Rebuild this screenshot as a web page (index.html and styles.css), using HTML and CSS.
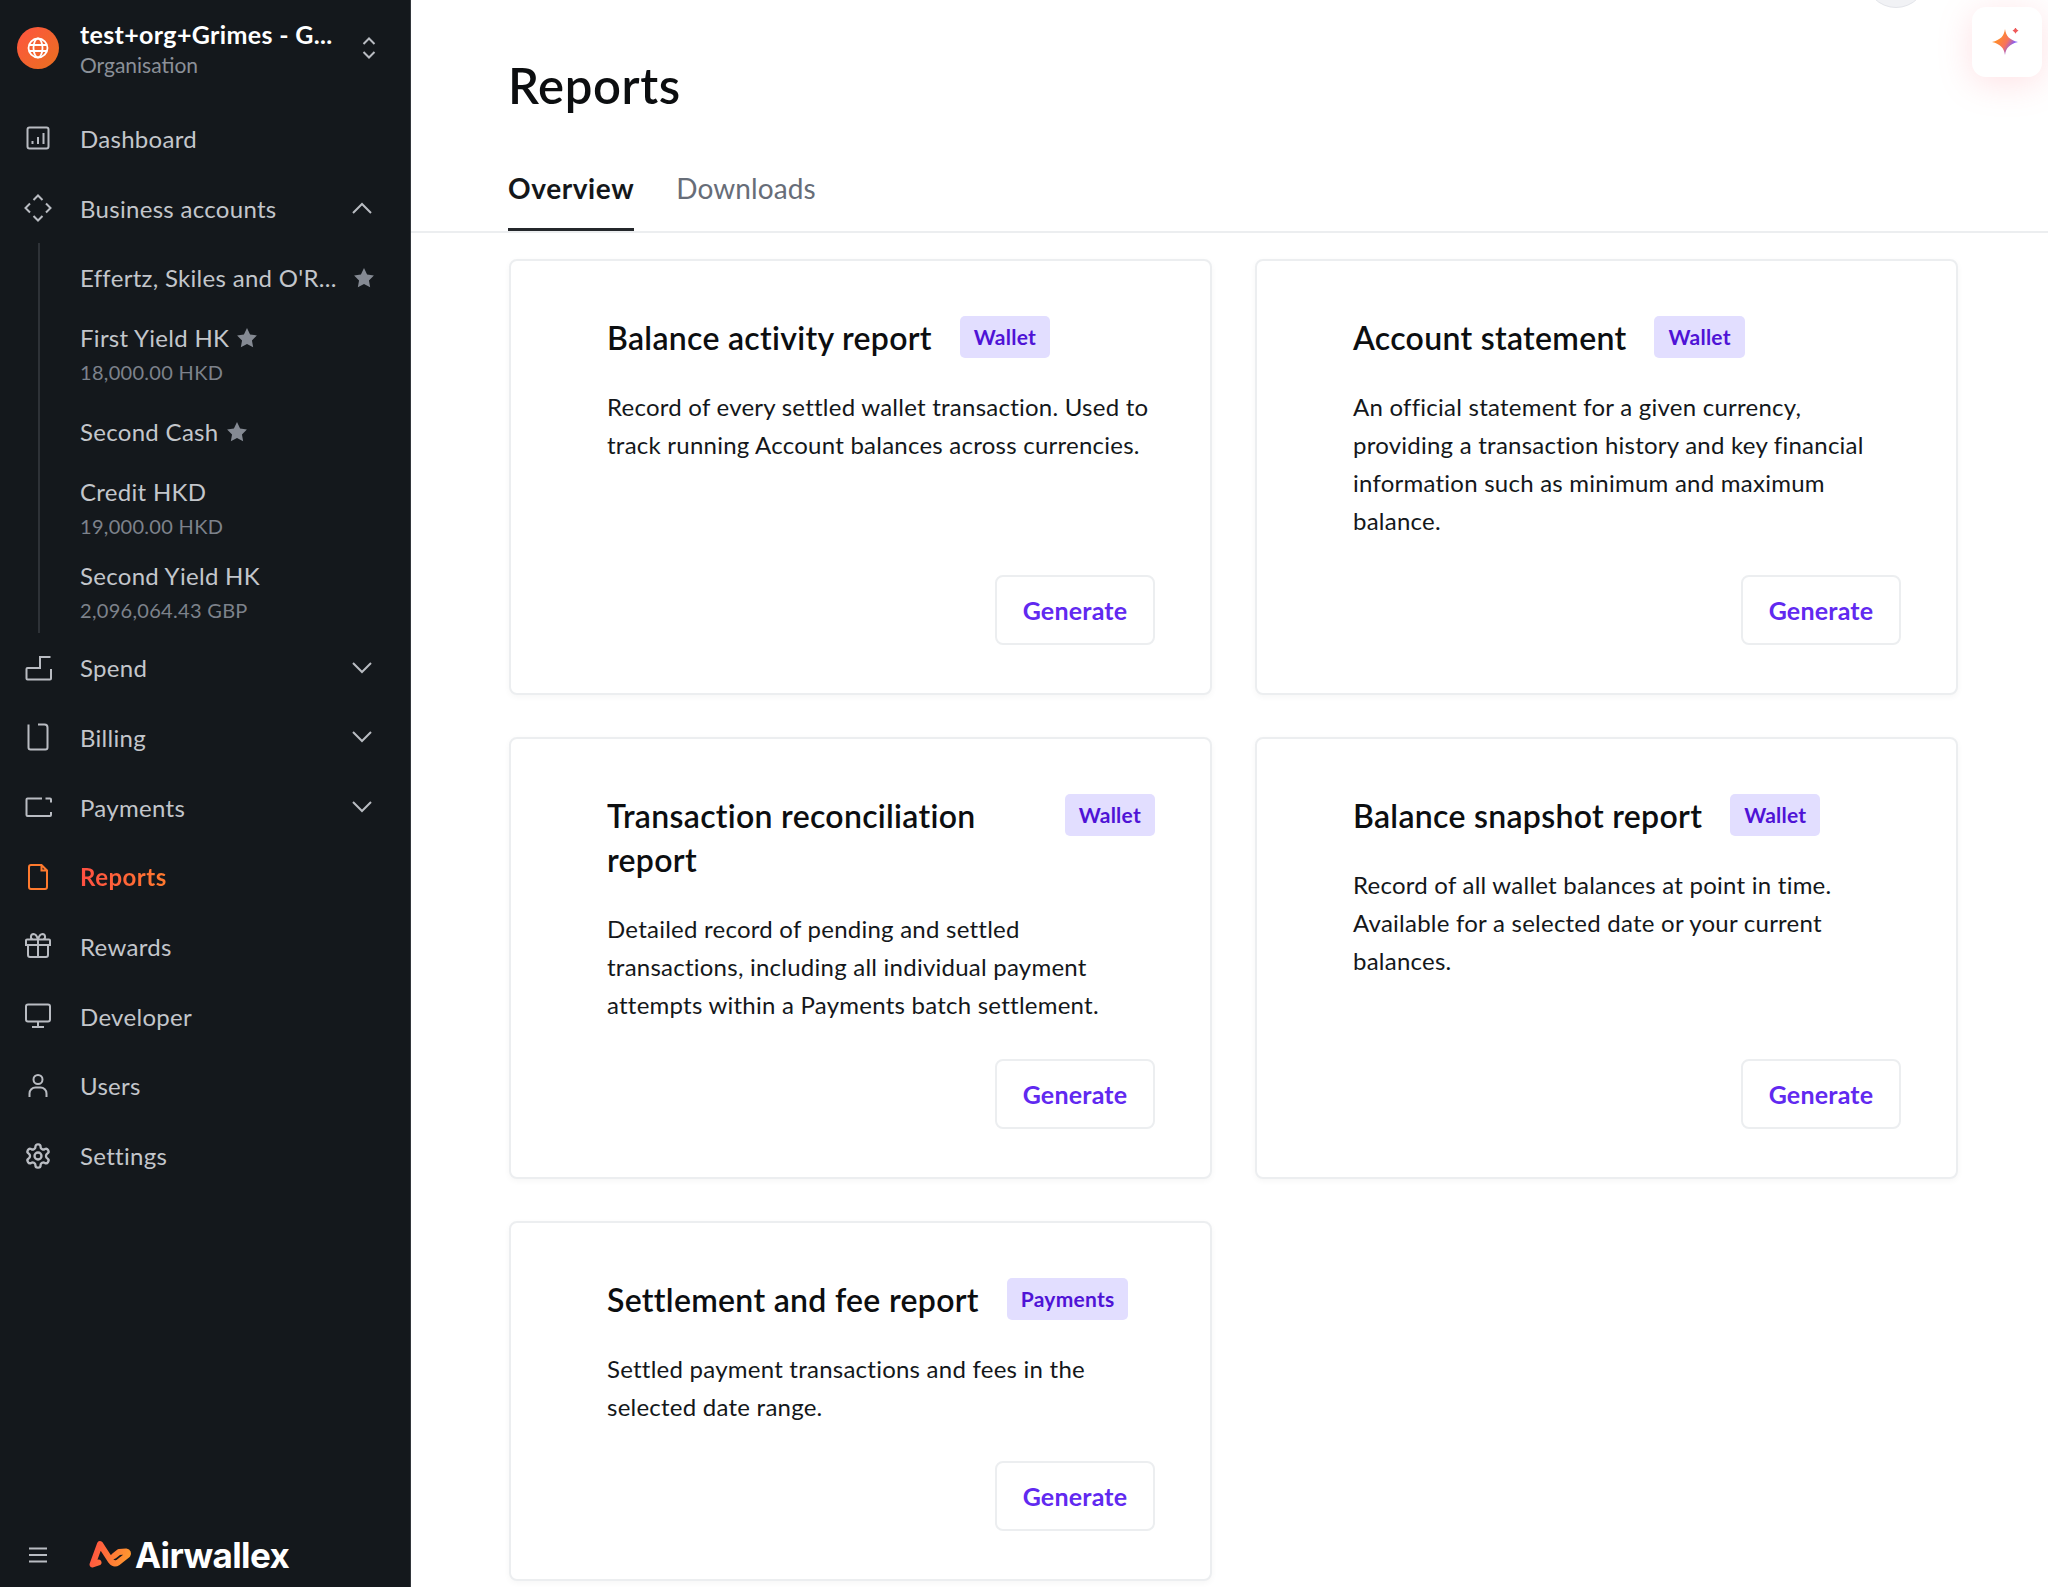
FILE: index.html
```html
<!DOCTYPE html>
<html lang="en">
<head>
    <meta charset="UTF-8">
    <title>Reports</title>
    <link rel="stylesheet" href="styles.css">
</head>
<body>
    <div class="sidebar">
        <div class="org">
            <div class="org-avatar">
                <svg width="22" height="22" viewBox="0 0 22 22" fill="none" stroke="#fff" stroke-width="1.8"><circle cx="11" cy="11" r="9.5"/><ellipse cx="11" cy="11" rx="4.5" ry="9.5"/><path d="M2 8h18M2 14h18"/></svg>
            </div>
            <div class="org-text">
                <div class="org-name">test+org+Grimes - G...</div>
                <div class="org-sub">Organisation</div>
            </div>
            <svg class="org-switch" width="16" height="26" viewBox="0 0 16 26" fill="none"><path d="M2.5 9L8 3.5 13.5 9M2.5 17L8 22.5 13.5 17"/></svg>
        </div>

        <div class="nav">
            <a class="nav-item">
                <svg class="nav-icon" viewBox="0 0 28 28"><rect x="3.5" y="3.5" width="21" height="21" rx="2"/><path d="M8.5 20v-3M14 20v-7M19.5 20V9"/></svg>
                <span>Dashboard</span>
            </a>
            <a class="nav-item">
                <svg class="nav-icon" viewBox="0 0 28 28"><path d="M9.5 6L14 1.5 18.5 6M22 9.5l4.5 4.5-4.5 4.5M18.5 22L14 26.5 9.5 22M6 18.5L1.5 14 6 9.5"/></svg>
                <span>Business accounts</span>
                <svg class="chev" viewBox="0 0 20 12"><path d="M1 11l9-9 9 9"/></svg>
            </a>

            <div class="subnav">
                <div class="sub-item sub-first">
                    <span class="sub-name sub-trunc">Effertz, Skiles and O'R...</span>
                    <svg class="star star-end" viewBox="0 0 20 20"><path d="M10 1l2.8 5.8 6.2.9-4.5 4.5 1.1 6.3L10 15.5 4.4 18.5l1.1-6.3L1 7.7l6.2-.9z"/></svg>
                </div>
                <div class="sub-item sub-two">
                    <div class="sub-line"><span class="sub-name">First Yield HK</span><svg class="star" viewBox="0 0 20 20"><path d="M10 1l2.8 5.8 6.2.9-4.5 4.5 1.1 6.3L10 15.5 4.4 18.5l1.1-6.3L1 7.7l6.2-.9z"/></svg></div>
                    <div class="sub-amount">18,000.00 HKD</div>
                </div>
                <div class="sub-item sub-one">
                    <div class="sub-line"><span class="sub-name">Second Cash</span><svg class="star" viewBox="0 0 20 20"><path d="M10 1l2.8 5.8 6.2.9-4.5 4.5 1.1 6.3L10 15.5 4.4 18.5l1.1-6.3L1 7.7l6.2-.9z"/></svg></div>
                </div>
                <div class="sub-item sub-two">
                    <div class="sub-line"><span class="sub-name">Credit HKD</span></div>
                    <div class="sub-amount">19,000.00 HKD</div>
                </div>
                <div class="sub-item sub-two">
                    <div class="sub-line"><span class="sub-name">Second Yield HK</span></div>
                    <div class="sub-amount">2,096,064.43 GBP</div>
                </div>
            </div>

            <a class="nav-item">
                <svg class="nav-icon" viewBox="0 0 28 28"><path d="M26.5 3H16v11H3.5a1 1 0 0 0-1 1v9.5a1 1 0 0 0 1 1H26a1 1 0 0 0 1-1V15"/></svg>
                <span>Spend</span>
                <svg class="chev" viewBox="0 0 20 12"><path d="M1 1l9 9 9-9"/></svg>
            </a>
            <a class="nav-item">
                <svg class="nav-icon" viewBox="0 0 28 28"><path d="M4.5 1.5v23a2 2 0 0 0 2 2h15a2 2 0 0 0 2-2v-20a3 3 0 0 0-3-3H14"/></svg>
                <span>Billing</span>
                <svg class="chev" viewBox="0 0 20 12"><path d="M1 1l9 9 9-9"/></svg>
            </a>
            <a class="nav-item">
                <svg class="nav-icon" viewBox="0 0 28 28"><path d="M18 5.5H3.5a1 1 0 0 0-1 1V22a1 1 0 0 0 1 1H26a1 1 0 0 0 1-1v-3M21.5 5.5H26a1 1 0 0 1 1 1v3"/></svg>
                <span>Payments</span>
                <svg class="chev" viewBox="0 0 20 12"><path d="M1 1l9 9 9-9"/></svg>
            </a>
            <a class="nav-item nav-active">
                <svg class="nav-icon" viewBox="0 0 28 28"><path d="M7 2h10.5L23 7.5V24a2 2 0 0 1-2 2H7a2 2 0 0 1-2-2V4a2 2 0 0 1 2-2zM17.5 2v5.5H23"/></svg>
                <span>Reports</span>
            </a>
            <a class="nav-item">
                <svg class="nav-icon" viewBox="0 0 28 28"><path d="M3 7.5h22a1 1 0 0 1 1 1V13H2V8.5a1 1 0 0 1 1-1zM4 13v10a2 2 0 0 0 2 2h16a2 2 0 0 0 2-2V13M14 7.5V25M14 7.5c-1-3.5-2.5-5.5-4.5-5.5a2.8 2.8 0 0 0-.5 5.5M14 7.5c1-3.5 2.5-5.5 4.5-5.5a2.8 2.8 0 0 1 .5 5.5"/></svg>
                <span>Rewards</span>
            </a>
            <a class="nav-item">
                <svg class="nav-icon" viewBox="0 0 28 28"><rect x="2" y="2.5" width="24" height="17" rx="2"/><path d="M14 19.5v5M8 25h12"/></svg>
                <span>Developer</span>
            </a>
            <a class="nav-item">
                <svg class="nav-icon" viewBox="0 0 28 28"><circle cx="14" cy="7.5" r="4.5"/><path d="M5.5 25v-3.5a6 6 0 0 1 6-6h5a6 6 0 0 1 6 6V25"/></svg>
                <span>Users</span>
            </a>
            <a class="nav-item">
                <svg class="nav-icon gear" viewBox="0 0 24 24"><path d="M12.22 2h-.44a2 2 0 0 0-2 2v.18a2 2 0 0 1-1 1.73l-.43.25a2 2 0 0 1-2 0l-.15-.08a2 2 0 0 0-2.73.73l-.22.38a2 2 0 0 0 .73 2.73l.15.1a2 2 0 0 1 1 1.72v.51a2 2 0 0 1-1 1.74l-.15.09a2 2 0 0 0-.73 2.73l.22.38a2 2 0 0 0 2.73.73l.15-.08a2 2 0 0 1 2 0l.43.25a2 2 0 0 1 1 1.73V20a2 2 0 0 0 2 2h.44a2 2 0 0 0 2-2v-.18a2 2 0 0 1 1-1.73l.43-.25a2 2 0 0 1 2 0l.15.08a2 2 0 0 0 2.73-.73l.22-.39a2 2 0 0 0-.73-2.73l-.15-.08a2 2 0 0 1-1-1.74v-.5a2 2 0 0 1 1-1.74l.15-.09a2 2 0 0 0 .73-2.73l-.22-.38a2 2 0 0 0-2.73-.73l-.15.08a2 2 0 0 1-2 0l-.43-.25a2 2 0 0 1-1-1.73V4a2 2 0 0 0-2-2z"/><circle cx="12" cy="12" r="3"/></svg>
                <span>Settings</span>
            </a>
        </div>

        <div class="side-foot">
            <svg class="menu-icon" viewBox="0 0 18 16"><path d="M0 1.5h18M0 8h18M0 14.5h18"/></svg>
            <div class="logo">
                <svg width="44" height="30" viewBox="0 0 44 30" fill="none" stroke="url(#logoGrad)" stroke-width="6" stroke-linejoin="round" stroke-linecap="round">
                    <defs><linearGradient id="logoGrad" gradientUnits="userSpaceOnUse" x1="2" y1="6" x2="42" y2="20"><stop offset="0" stop-color="#ff4f42"/><stop offset="1" stop-color="#ff9a2e"/></linearGradient></defs>
                    <path d="M10.5 22.5L4.5 24.5 12 4 23 21Q26 25 30 22.5L39.5 15Q41 12 38 11.5L31 12 26 16"/>
                </svg>
                <span class="logo-text">Airwallex</span>
            </div>
        </div>
    </div>

    <div class="main">
        <div class="top-circle"></div>
        <div class="ai-btn">
            <svg width="34" height="34" viewBox="0 0 34 34"><defs><linearGradient id="sparkGrad" x1="0" y1="0.2" x2="1" y2="0.8"><stop offset="0.25" stop-color="#ff8a2e"/><stop offset="0.55" stop-color="#f7735c"/><stop offset="0.8" stop-color="#7f5cff"/></linearGradient></defs><path fill="url(#sparkGrad)" d="M15 4c1 7 4.5 11 13 13-8.5 2-12 6-13 13-1-7-4.5-11-13-13 8.5-2 12-6 13-13z"/><path fill="#ef5a5a" stroke="#fff" stroke-width="1.5" d="M25.5 0c.6 3 1.6 4.5 5 5.5-3.4 1-4.4 2.5-5 5.5-.6-3-1.6-4.5-5-5.5 3.4-1 4.4-2.5 5-5.5z"/></svg>
        </div>

        <div class="header">
            <h1>Reports</h1>
            <div class="tabs">
                <a class="tab tab-active">Overview</a>
                <a class="tab">Downloads</a>
            </div>
        </div>

        <div class="cards">
            <div class="card">
                <div class="card-head"><h3>Balance activity report</h3><span class="badge">Wallet</span></div>
                <p>Record of every settled wallet transaction. Used to track running Account balances across currencies.</p>
                <button class="generate-btn">Generate</button>
            </div>
            <div class="card">
                <div class="card-head"><h3>Account statement</h3><span class="badge">Wallet</span></div>
                <p>An official statement for a given currency, providing a transaction history and key financial information such as minimum and maximum balance.</p>
                <button class="generate-btn">Generate</button>
            </div>
            <div class="card">
                <div class="card-head"><h3>Transaction reconciliation report</h3><span class="badge">Wallet</span></div>
                <p>Detailed record of pending and settled transactions, including all individual payment attempts within a Payments batch settlement.</p>
                <button class="generate-btn">Generate</button>
            </div>
            <div class="card">
                <div class="card-head"><h3>Balance snapshot report</h3><span class="badge">Wallet</span></div>
                <p>Record of all wallet balances at point in time. Available for a selected date or your current balances.</p>
                <button class="generate-btn">Generate</button>
            </div>
            <div class="card">
                <div class="card-head"><h3>Settlement and fee report</h3><span class="badge">Payments</span></div>
                <p>Settled payment transactions and fees in the selected date range.</p>
                <button class="generate-btn">Generate</button>
            </div>
        </div>
    </div>
</body>
</html>
```

FILE: styles.css
```css
* {
    box-sizing: border-box;
}

html, body {
    margin: 0;
    height: 100%;
    overflow: hidden;
}

body {
    display: flex;
    height: 1587px;
    font-family: 'Lato', 'Liberation Sans', sans-serif;
    background: #fff;
    color: #14171a;
}

/* sidebar */
.sidebar {
    width: 411px;
    flex-shrink: 0;
    height: 1587px;
    background: #14181c;
    border-right: 1px solid #33373c;
    display: flex;
    flex-direction: column;
}

.org {
    height: 96px;
    display: flex;
    align-items: center;
    padding-left: 17px;
}

.org-avatar {
    width: 42px;
    height: 42px;
    border-radius: 50%;
    background: linear-gradient(135deg, #ff5440, #e8701f);
    display: flex;
    align-items: center;
    justify-content: center;
    margin-right: 21px;
}

.org-text {
    width: 281px;
}

.org-name {
    color: #fff;
    font-size: 25px;
    font-weight: 700;
    line-height: 34px;
    letter-spacing: 0.35px;
}

.org-sub {
    color: #8b9098;
    font-size: 21px;
    line-height: 28px;
}

.org-switch path {
    stroke: #b9bcc2;
    stroke-width: 2;
}

.nav {
    padding-top: 7.5px;
}

.nav-item {
    height: 69.7px;
    display: flex;
    align-items: center;
    padding-left: 24px;
    color: #c3c6cb;
    font-size: 24px;
    letter-spacing: 0.3px;
}

.nav-item span {
    margin-left: 28px;
}

.nav-icon {
    width: 28px;
    height: 28px;
    fill: none;
    stroke: #b9bcc2;
    stroke-width: 2;
}

.chev {
    width: 20px;
    height: 12px;
    margin-left: auto;
    margin-right: 38px;
    fill: none;
    stroke: #b9bcc2;
    stroke-width: 2;
}

.nav-active span {
    font-weight: 700;
    background: linear-gradient(90deg, #ff4f42, #ff7a2e);
    -webkit-background-clip: text;
    background-clip: text;
    color: transparent;
    letter-spacing: 0.5px;
}

.nav-active .nav-icon {
    stroke: #ff7a2e;
}

.subnav {
    margin-left: 38px;
    border-left: 2px solid #2e3237;
    padding-left: 40px;
    height: 390px;
}

.sub-item {
    display: flex;
    flex-direction: column;
    justify-content: center;
}

.sub-first {
    flex-direction: row;
    align-items: center;
    justify-content: flex-start;
    height: 70px;
}

.sub-two {
    height: 84px;
    padding-bottom: 2px;
}

.sub-one {
    height: 70px;
}

.sub-line {
    display: flex;
    align-items: center;
    height: 36px;
}

.sub-name {
    color: #c3c6cb;
    font-size: 24px;
    letter-spacing: 0.3px;
}

.sub-trunc {
    width: 273px;
}

.sub-amount {
    color: #7d828b;
    font-size: 20px;
    line-height: 32px;
    letter-spacing: 0.3px;
}

.star {
    width: 22px;
    height: 22px;
    margin-left: 7px;
    fill: #858a93;
}

.star-end {
    margin-left: 0;
}

.side-foot {
    margin-top: auto;
    height: 64px;
    display: flex;
    align-items: center;
    padding-left: 29px;
}

.menu-icon {
    width: 18px;
    height: 16px;
    fill: none;
    stroke: #b9bcc2;
    stroke-width: 2;
}

.logo {
    display: flex;
    align-items: center;
    margin-left: 41px;
    gap: 3px;
}

.logo-text {
    color: #fff;
    font-family: 'Inter', sans-serif;
    font-size: 35px;
    font-weight: 700;
    letter-spacing: -0.6px;
}

/* main area */
.main {
    flex: 1;
    position: relative;
    overflow: hidden;
}

.top-circle {
    position: absolute;
    top: -54px;
    left: 1454px;
    width: 62px;
    height: 62px;
    border-radius: 50%;
    background: #f1f2f5;
    border: 1px solid #e2e4e9;
}

.ai-btn {
    position: absolute;
    top: 7px;
    left: 1561px;
    width: 70px;
    height: 70px;
    border-radius: 14px;
    background: #fff;
    box-shadow: 0 6px 34px rgba(255, 120, 130, 0.22);
    display: flex;
    align-items: center;
    justify-content: center;
}

.header {
    border-bottom: 2px solid #eceef0;
    padding-left: 97px;
    height: 233px;
}

h1 {
    margin: 0;
    padding-top: 54px;
    font-size: 49px;
    font-weight: 600;
    line-height: 62px;
    letter-spacing: 0.6px;
    color: #0c0e10;
}

.tabs {
    display: flex;
    gap: 42px;
    margin-top: 53px;
}

.tab {
    font-size: 28px;
    line-height: 38px;
    color: #676d78;
    padding-bottom: 21px;
    letter-spacing: 0.1px;
}

.tab-active {
    color: #14171a;
    font-weight: 700;
    border-bottom: 3px solid #24272b;
    letter-spacing: 0.6px;
}

.cards {
    display: grid;
    grid-template-columns: 703px 703px;
    column-gap: 43px;
    row-gap: 42px;
    padding: 26px 0 0 98px;
}

.card {
    border: 2px solid #eceef0;
    border-radius: 8px;
    background: #fff;
    box-shadow: 0 2px 6px rgba(20, 23, 26, 0.04);
    padding: 55px 55px 48px 96px;
    display: flex;
    flex-direction: column;
}

.card-head {
    display: flex;
    align-items: flex-start;
    gap: 28px;
}

h3 {
    margin: 0;
    font-size: 32px;
    font-weight: 600;
    line-height: 44px;
    letter-spacing: 0.3px;
    color: #0c0e10;
}

.badge {
    background: #e2deff;
    color: #4f13d6;
    font-size: 21px;
    font-weight: 700;
    line-height: 42px;
    height: 42px;
    padding: 0 14px;
    border-radius: 5px;
    flex-shrink: 0;
    letter-spacing: 0.25px;
}

.card p {
    margin: 28px 0 35px;
    font-size: 24px;
    line-height: 38px;
    letter-spacing: 0.24px;
    color: #14171a;
}

.generate-btn {
    margin-top: auto;
    align-self: flex-end;
    width: 160px;
    height: 70px;
    background: #fff;
    border: 2px solid #eceef0;
    border-radius: 8px;
    color: #6129f0;
    font-family: inherit;
    font-size: 25px;
    font-weight: 700;
    letter-spacing: 0.2px;
}
```
